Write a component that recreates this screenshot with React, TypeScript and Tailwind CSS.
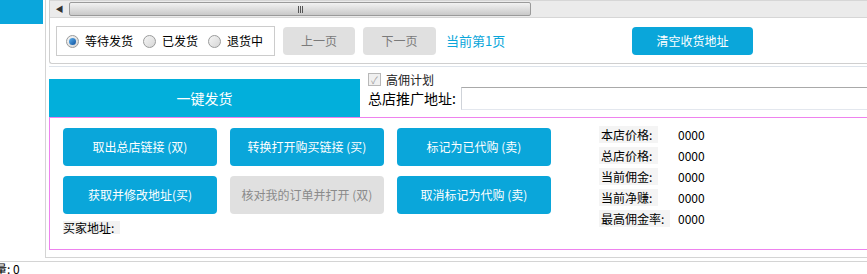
import React from "react";

const font = { fontFamily: '"Noto Sans CJK SC", "Noto Sans", sans-serif' };

const Radio = ({ checked, label }: { checked?: boolean; label: string }) => (
  <label className="flex items-center gap-[6px]">
    <span className="flex h-[13px] w-[13px] items-center justify-center rounded-full border border-[#9a9b9b] bg-gradient-to-br from-[#f6f6f6] to-[#d6d6d6]">
      {checked && (
        <span className="h-[7px] w-[7px] rounded-full bg-gradient-to-br from-[#5fb4f0] to-[#0d4f9c]" />
      )}
    </span>
    <span className="text-[12px] leading-none text-black">{label}</span>
  </label>
);

const ActionButton = ({ children, disabled }: { children: React.ReactNode; disabled?: boolean }) => (
  <button
    className={
      disabled
        ? "flex h-[38px] w-[154px] items-center justify-center rounded-[4px] bg-[#e0e0e0] text-[12px] text-[#8a8a8a]"
        : "flex h-[38px] w-[154px] items-center justify-center rounded-[4px] bg-[#0aa6da] text-[12px] text-white"
    }
  >
    {children}
  </button>
);

const stats = [
  { label: "本店价格:", value: "0000", w: "w-[59px]" },
  { label: "总店价格:", value: "0000", w: "w-[59px]" },
  { label: "当前佣金:", value: "0000", w: "w-[59px]" },
  { label: "当前净赚:", value: "0000", w: "w-[59px]" },
  { label: "最高佣金率:", value: "0000", w: "w-[71px]" },
];

export default function App() {
  return (
    <div className="relative h-[274px] w-[867px] overflow-hidden bg-white" style={font}>
      <div className="flex h-[258px]">
        {/* left column */}
        <div className="w-[45px] shrink-0">
          <div className="h-[24px] w-[43px] bg-[#0aa6dc]" />
        </div>

        {/* main container */}
        <div className="w-[900px] shrink-0 border-b border-l border-[#d4d4d4] pl-[3px]">
          {/* top group box */}
          <div className="h-[64px] rounded-bl-[3px] border-b border-l border-[#cfcfcf]">
            {/* scrollbar */}
            <div className="flex h-[18px] items-center border-b border-t border-[#d6d6d6] bg-[#ebebeb]">
              <div className="flex h-full w-[19px] items-center justify-center text-[8px] text-[#333]">◀</div>
              <div className="flex h-[14px] w-[462px] items-center justify-center rounded-[2px] border border-[#9a9a9a] bg-gradient-to-b from-[#f2f2f2] to-[#c9c9c9]">
                <span className="flex gap-[1px]">
                  <span className="h-[7px] w-[1px] bg-[#555]" />
                  <span className="h-[7px] w-[1px] bg-[#555]" />
                  <span className="h-[7px] w-[1px] bg-[#555]" />
                </span>
              </div>
            </div>

            {/* radio + paging row */}
            <div className="mt-[8px] flex items-center pl-[6px]">
              <div className="flex h-[30px] w-[219px] items-center gap-[10px] border border-[#cccccc] pl-[9px]">
                <Radio checked label="等待发货" />
                <Radio label="已发货" />
                <Radio label="退货中" />
              </div>
              <button className="ml-[8px] h-[28px] w-[72px] rounded-[4px] bg-[#e0e0e0] text-[12px] text-[#7a7a7a]">上一页</button>
              <button className="ml-[8px] h-[28px] w-[73px] rounded-[4px] bg-[#e0e0e0] text-[12px] text-[#7a7a7a]">下一页</button>
              <span className="ml-[10px] w-[66px] text-[13px] text-[#0aa6da]">当前第1页</span>
              <button className="ml-[120px] h-[28px] w-[121px] rounded-[4px] bg-[#0aa6da] text-[12px] text-white">清空收货地址</button>
            </div>
          </div>

          <div className="mt-[2px] border-t border-[#dde3ea]" />

          {/* one-click row */}
          <div className="flex h-[50px] items-end">
            <div className="flex h-[38px] w-[311px] items-center justify-center bg-[#02afdb] text-[14px] text-white">
              一键发货
            </div>
            <div className="ml-[8px] flex h-full flex-col pt-[5px]">
              <label className="flex h-[15px] items-center gap-[5px]">
                <span className="flex h-[13px] w-[13px] items-center justify-center border border-[#b8b8b8] bg-[#f0f0f0] text-[10px] leading-none text-[#a0a0a0]">✓</span>
                <span className="text-[12px] leading-none text-[#222]">高佣计划</span>
              </label>
              <div className="flex h-[23px] items-center">
                <span className="w-[93px] text-[14px] text-black">总店推广地址:</span>
                <div className="h-[23px] w-[440px] border-b border-l border-t border-b-[#e3e7ee] border-l-[#cfd3d9] border-t-[#a9a9a9] bg-white" />
              </div>
            </div>
          </div>

          {/* action box */}
          <div className="flex h-[133px] border border-[#ee82ee] pl-[13px] pt-[10px]">
            <div className="flex flex-col">
              <div className="grid grid-cols-[154px_154px_154px] gap-x-[13px] gap-y-[10px]">
                <ActionButton>取出总店链接 (双)</ActionButton>
                <ActionButton>转换打开购买链接 (买)</ActionButton>
                <ActionButton>标记为已代购 (卖)</ActionButton>
                <ActionButton>获取并修改地址(买)</ActionButton>
                <ActionButton disabled>核对我的订单并打开 (双)</ActionButton>
                <ActionButton>取消标记为代购 (卖)</ActionButton>
              </div>
              <span className="mt-[7px] w-[57px] bg-[#f2f2f2] text-[12px] leading-[13px] text-black">买家地址:</span>
            </div>
            <div className="-mt-[2px] ml-[48px] flex flex-col gap-[4px]">
              {stats.map((s) => (
                <div key={s.label} className="flex h-[17px] items-center">
                  <span className={`${s.w} bg-[#f4f4f4] pl-[2px] text-[12px] leading-[17px] text-black`}>{s.label}</span>
                  <span className={s.label === "最高佣金率:" ? "ml-[8px] text-[12px] text-black" : "ml-[20px] text-[12px] text-black"}>{s.value}</span>
                </div>
              ))}
            </div>
          </div>
        </div>
      </div>

      <div className="mt-[3px] border-t border-[#d4d4d4]" />
      <div className="-ml-[5px] text-[12px] leading-[14px] text-black">量: 0</div>
    </div>
  );
}
